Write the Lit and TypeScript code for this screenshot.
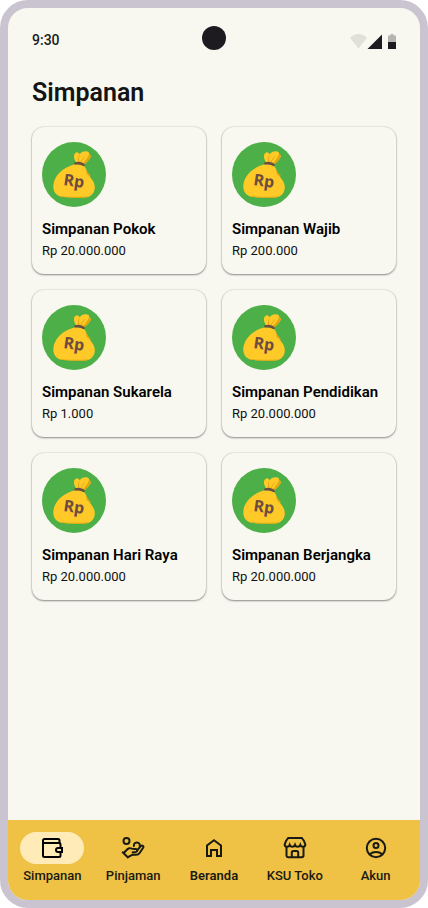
import { LitElement, html, svg, css } from "lit";
import { customElement, property } from "lit/decorators.js";
import { classMap } from "lit/directives/class-map.js";

interface Saving {
  name: string;
  amount: string;
}

interface Destination {
  label: string;
  icon: string;
  active?: boolean;
  strong?: boolean;
}

const SAVINGS: Saving[] = [
  { name: "Simpanan Pokok", amount: "Rp 20.000.000" },
  { name: "Simpanan Wajib", amount: "Rp 200.000" },
  { name: "Simpanan Sukarela", amount: "Rp 1.000" },
  { name: "Simpanan Pendidikan", amount: "Rp 20.000.000" },
  { name: "Simpanan Hari Raya", amount: "Rp 20.000.000" },
  { name: "Simpanan Berjangka", amount: "Rp 20.000.000" },
];

const DESTINATIONS: Destination[] = [
  { label: "Simpanan", icon: "wallet", active: true },
  { label: "Pinjaman", icon: "hand" },
  { label: "Beranda", icon: "home", strong: true },
  { label: "KSU Toko", icon: "store" },
  { label: "Akun", icon: "account" },
];

const ICONS: Record<string, unknown> = {
  wallet: svg`
    <path d="M19.500 7V4.500A1.500 1.500 0 0 0 18 3H4.500A1.500 1.500 0 0 0 3 4.500V19.500A1.500 1.500 0 0 0 4.500 21H19a1.500 1.500 0 0 0 1.500-1.500V16.500"/>
    <path d="M3 5.500A1.500 1.500 0 0 0 4.500 7H19a1.500 1.500 0 0 1 1.500 1.500V11.500"/>
    <path d="M22 12h-4a2 2 0 0 0 0 4h4z"/>`,
  hand: svg`
    <circle cx="5.500" cy="5" r="3"/>
    <path d="M13.200 10.800a3 3 0 1 1 5.300 0"/>
    <path d="M1.200 15.800l6.300 6.200"/>
    <path d="M3 16.800l3.400-3.600c.9-.9 2.200-1.200 3.600-.8 1.400.5 2.800.8 4.400.6 2.200-.3 2.600 2.300.6 2.900l-4.200.6"/>
    <path d="M15.800 14.800l3.900-4.600c1.300-1.500 3.400-.1 2.400 1.600l-3.300 4.900a4.500 4.500 0 0 1-3.800 2.100h-2.600c-1 0-1.900.3-2.700.9L7 21.200"/>`,
  home: svg`<path d="M12 4.300l7 5.200V20h-4v-6H9v6H5V9.500z"/>`,
  store: svg`
    <path d="M5.200 2h13.600L21 5l1.300 3.500c0 1.400-1 2.300-2.300 2.300s-2.300-.8-2.700-1.900c-.4 1.100-1.400 1.900-2.700 1.900s-2.200-.8-2.600-1.900c-.4 1.100-1.300 1.900-2.600 1.900s-2.300-.8-2.700-1.900C6.300 10 5.300 10.800 4 10.800S1.700 9.900 1.700 8.500L3 5z"/>
    <path d="M3.500 11v8.500A1.800 1.800 0 0 0 5.300 21.300h13.400a1.800 1.800 0 0 0 1.800-1.800V11"/>
    <path d="M8.800 21v-4.500a1.500 1.500 0 0 1 1.500-1.500h3.400a1.500 1.500 0 0 1 1.500 1.500V21"/>`,
  account: svg`
    <circle cx="12" cy="12" r="9.200"/>
    <circle cx="12" cy="9.500" r="2.500"/>
    <path d="M5.800 18.200C7.400 16.800 9.600 16 12 16s4.600.8 6.200 2.200"/>`,
};

@customElement("status-bar")
class StatusBar extends LitElement {
  static styles = css`
    :host {
      display: flex;
      justify-content: space-between;
      align-items: flex-end;
      height: 52px;
      padding: 10px 24px;
      box-sizing: border-box;
      position: relative;
      color: #1d1b20;
    }
    .time {
      font-size: 14px;
      line-height: 20px;
      font-weight: 500;
    }
    .camera {
      position: absolute;
      top: 18px;
      left: calc(50% - 12px);
      width: 24px;
      height: 24px;
      border-radius: 50%;
      background: #1d1b20;
    }
    .signals {
      display: block;
      width: 46px;
      height: 17px;
    }
  `;

  render() {
    return html`
      <span class="time">9:30</span>
      <span class="camera"></span>
      <svg class="signals" viewBox="0 0 46 17" fill="currentColor" aria-hidden="true">
        <path opacity=".1" d="M8.500 15.500L0 5C2.200 2.500 5.200 1 8.500 1S14.800 2.500 17 5z" />
        <path d="M17.500 16L32 1.500V16z" />
        <path opacity=".3" d="M38 9V2.500h2.500V1h3v1.500H46V9z" />
        <path d="M38 9h8v7h-8z" />
      </svg>
    `;
  }
}

@customElement("saving-card")
class SavingCard extends LitElement {
  @property() name = "";
  @property() amount = "";

  static styles = css`
    :host {
      display: block;
      padding: 15px 10px;
      border-radius: 12px;
      background: #f8f8f0;
      box-shadow: 0 1px 2px rgba(0, 0, 0, 0.4), 0 0 2px rgba(0, 0, 0, 0.2);
    }
    .badge {
      display: block;
      width: 64px;
      height: 65px;
    }
    .currency {
      font: 700 16px "Noto Sans", "Open Sans", sans-serif;
      fill: #6d4c41;
    }
    .name {
      margin: 12px 0 4px;
      font-size: 15px;
      line-height: 20px;
      font-weight: 600;
      color: #000;
      white-space: nowrap;
    }
    .amount {
      margin: 0;
      font-size: 13px;
      line-height: 16px;
      color: #111;
    }
  `;

  render() {
    return html`
      <svg class="badge" viewBox="0 0 64 65" aria-hidden="true">
        <ellipse cx="32" cy="32.500" rx="32" ry="32.500" fill="#4caf47" />
        <path fill="#ffca28" d="M34 20c-2.500-3.500-3-8.200.2-9.600 1.700-.5 2.800 1 3.600 1.900 1.200-2.600 4.500-3.600 7.500-2.900 1.600.3 2.200 1.600 1.700 2.900 2 .5 2.300 2.200 1 3.900-1.500 2.200-3.500 4.600-6 6z" />
        <path fill="#e2a610" d="M47 12.300c2 .5 2.300 2.200 1 3.900-1.500 2.200-3.500 4.600-6 6l-1.400-.6c2.800-2.400 4.800-5.700 6.400-9.300zM37.800 12.300c-.8 2.500-.9 5-.4 7.700l-1-.2c-.6-2.600-.2-5.400 1.400-7.500zM45 13.200c-2.500 1.600-4.300 4-5.400 7l-.8-.1c1-3.200 3-5.700 6.200-6.900z" />
        <path fill="#ffca28" d="M32 22.500c3-.8 7.500-.1 10.300 1.800 2.200 2.300 2.600 6.200 4.200 8.700 2.800 3.700 6.300 7 6.300 12.500 0 4.800-3.400 9.800-9.700 9.900-7.200.4-14.600.3-21.600-.3-6.700-.7-10.200-5-10.200-10.600C11.300 34.200 20.800 25.500 32 22.500z" />
        <path fill="#e2a610" d="M44.300 27.200c1.200 3 2.800 4.900 5.100 7.400-2.300-.4-4.500-1.700-5-3.500zM17 54c8 1 22 1.200 30 .2-1.200.7-2.500 1.100-3.900 1.200-7.200.4-14.600.3-21.600-.3-1.600-.2-3.200-.5-4.500-1.100z" />
        <path fill="#6d4c41" d="M32.400 20.800c3-1.900 8.400-.9 10.300 1.800.6 1-.5 2-1.600 1.500-2.400-1.300-4.800-1.700-7.300-1.500-1.400.1-2.300-1-1.400-1.800z" />
        <text class="currency" x="21" y="43" transform="rotate(8 21 43)">Rp</text>
      </svg>
      <h2 class="name">${this.name}</h2>
      <p class="amount">${this.amount}</p>
    `;
  }
}

@customElement("nav-bar")
class NavBar extends LitElement {
  static styles = css`
    .bar {
      display: grid;
      grid-template-columns: repeat(5, minmax(0, 1fr));
      column-gap: 8px;
      padding: 12px 8px 16px;
      background: #efc144;
    }
    .item {
      display: flex;
      flex-direction: column;
      align-items: center;
      gap: 4px;
      color: #1a1a14;
      text-decoration: none;
      font-size: 13px;
      line-height: 16px;
      font-weight: 500;
      white-space: nowrap;
    }
    .pill {
      display: flex;
      align-items: center;
      justify-content: center;
      width: 64px;
      height: 32px;
      border-radius: 16px;
    }
    .active .pill {
      background: #ffebb8;
      color: #000;
    }
    .strong {
      font-weight: 600;
    }
    .icon {
      width: 24px;
      height: 24px;
      fill: none;
      stroke: currentColor;
      stroke-width: 2;
    }
  `;

  render() {
    return html`
      <nav class="bar">
        ${DESTINATIONS.map(
          (d) => html`
            <a
              class=${classMap({ item: true, active: !!d.active, strong: !!d.strong })}
              href="#${d.icon}"
              aria-current=${d.active ? "page" : "false"}
            >
              <span class="pill">
                <svg class="icon" viewBox="0 0 24 24" aria-hidden="true">${ICONS[d.icon]}</svg>
              </span>
              <span>${d.label}</span>
            </a>
          `
        )}
      </nav>
    `;
  }
}

@customElement("app-root")
class AppRoot extends LitElement {
  static styles = css`
    :host {
      display: flex;
      flex-direction: column;
      min-height: 100vh;
      box-sizing: border-box;
      border: 8px solid #cac4d0;
      border-radius: 28px;
      overflow: hidden;
      background: #f8f8f0;
      font-family: Roboto, "Liberation Sans", sans-serif;
    }
    .content {
      flex: 1;
      padding: 16px 24px;
    }
    .title {
      margin: 0 0 17px;
      font-size: 25px;
      line-height: 34px;
      font-weight: 600;
      color: #141414;
    }
    .cards {
      display: grid;
      grid-template-columns: repeat(2, minmax(0, 1fr));
      gap: 16px;
    }
  `;

  render() {
    return html`
      <status-bar></status-bar>
      <main class="content">
        <h1 class="title">Simpanan</h1>
        <div class="cards">
          ${SAVINGS.map((s) => html`<saving-card name=${s.name} amount=${s.amount}></saving-card>`)}
        </div>
      </main>
      <nav-bar></nav-bar>
    `;
  }
}
